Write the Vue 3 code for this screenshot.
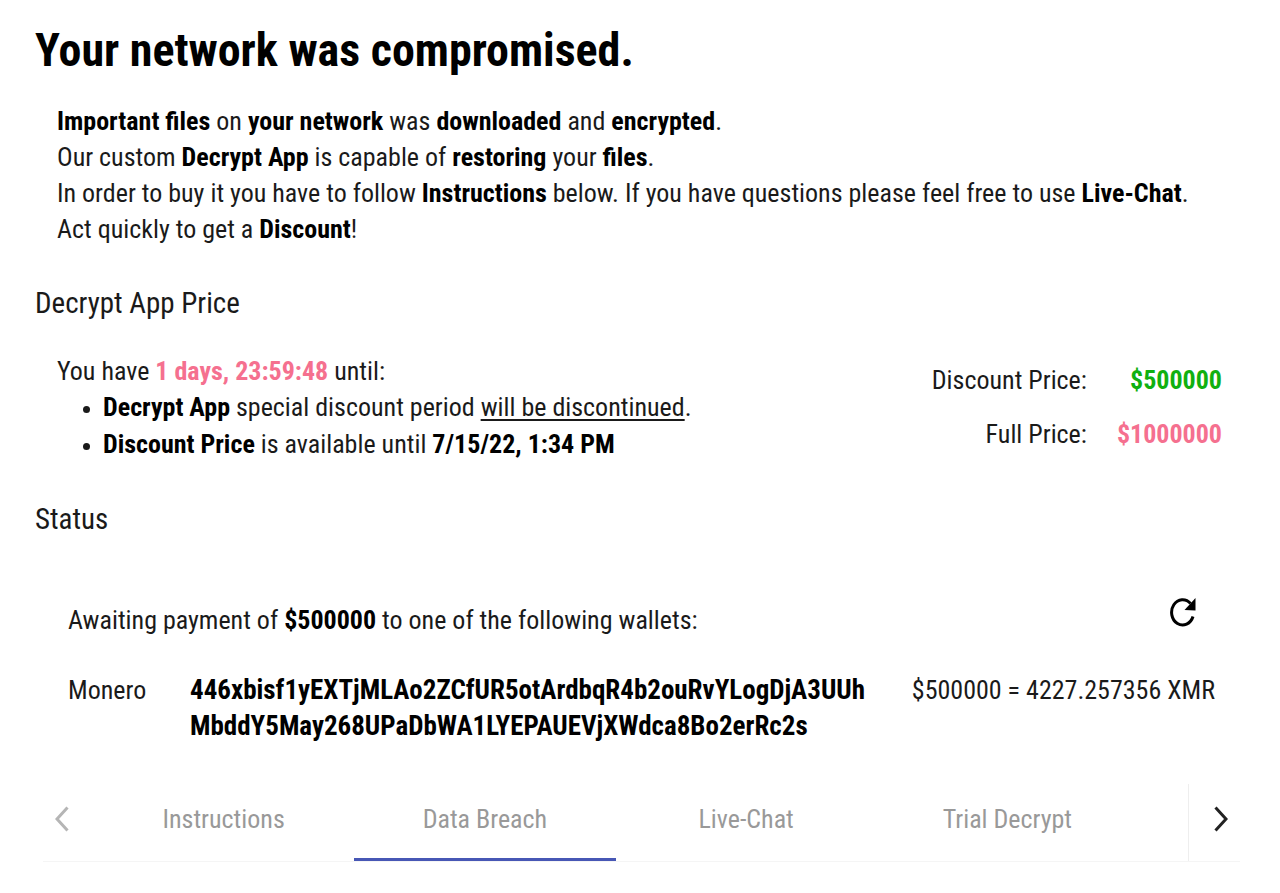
<script setup>
import { ref } from 'vue'

const tabs = ['Instructions', 'Data Breach', 'Live-Chat', 'Trial Decrypt']
const active = ref('Data Breach')
</script>

<template>
  <main class="page">
    <h1>Your network was compromised.</h1>

    <section class="intro">
      <p><b>Important files</b> on <b>your network</b> was <b>downloaded</b> and <b>encrypted</b>.</p>
      <p>Our custom <b>Decrypt App</b> is capable of <b>restoring</b> your <b>files</b>.</p>
      <p>In order to buy it you have to follow <b>Instructions</b> below. If you have questions please feel free to use <b>Live-Chat</b>.</p>
      <p>Act quickly to get a <b>Discount</b>!</p>
    </section>

    <h2>Decrypt App Price</h2>
    <section class="price">
      <div class="terms">
        <p>You have <b class="pink">1 days, 23:59:48</b> until:</p>
        <ul>
          <li><b>Decrypt App</b> special discount period <u>will be discontinued</u>.</li>
          <li><b>Discount Price</b> is available until <b>7/15/22, 1:34 PM</b></li>
        </ul>
      </div>
      <dl>
        <dt>Discount Price:</dt>
        <dd class="green">$500000</dd>
        <dt>Full Price:</dt>
        <dd class="pink">$1000000</dd>
      </dl>
    </section>

    <h2>Status</h2>
    <section class="status">
      <div class="awaiting">
        <p>Awaiting payment of <b>$500000</b> to one of the following wallets:</p>
        <button class="refresh" aria-label="Refresh">
          <svg viewBox="0 0 27 30" width="27" height="30">
            <path d="M21.5 6.5A11 12.7 0 1 0 24 19.5" fill="none" stroke="#000" stroke-width="3" />
            <path d="M26.5 1v12.5L15.5 13z" />
          </svg>
        </button>
      </div>
      <div class="wallet">
        <span>Monero</span>
        <b class="address">446xbisf1yEXTjMLAo2ZCfUR5otArdbqR4b2ouRvYLogDjA3UUh<wbr />MbddY5May268UPaDbWA1LYEPAUEVjXWdca8Bo2erRc2s</b>
        <span>$500000 = 4227.257356 XMR</span>
      </div>
    </section>

    <nav class="tabs">
      <button class="arrow" aria-label="Previous tabs" disabled>
        <svg viewBox="0 0 14 26" width="14" height="26"><path d="M12.5 1.5 2 13l10.500 11.500" /></svg>
      </button>
      <div class="list" role="tablist">
        <button v-for="tab in tabs" :key="tab" class="tab" role="tab" :class="{ active: tab === active }" :aria-selected="tab === active" @click="active = tab">{{ tab }}</button>
      </div>
      <button class="arrow next" aria-label="Next tabs">
        <svg viewBox="0 0 14 26" width="14" height="26"><path d="M1.500 1.500 12 13 1.500 24.500" /></svg>
      </button>
    </nav>
  </main>
</template>

<style>
body {
  background: #fff;
}
</style>

<style scoped>
.page {
  box-sizing: border-box;
  padding: 20px 40px 30px 35px;
  font: 26px/36px "Roboto Condensed", Roboto, sans-serif;
  color: #1a1a1a;
}
h1 {
  margin: 0;
  font-size: 46px;
  line-height: 60px;
  font-weight: 700;
  color: #000;
}
h2 {
  margin: 0;
  font-size: 29px;
  line-height: 36px;
  font-weight: 400;
}
p,
ul,
dl,
dd {
  margin: 0;
}
b {
  color: #000;
}
.intro {
  padding: 23px 0 38px 22px;
}
.price {
  display: flex;
  justify-content: space-between;
  align-items: flex-start;
  padding: 32px 18px 38px 22px;
}
ul {
  padding-left: 46px;
}
li {
  line-height: 37px;
}
li::marker {
  font-size: 22px;
}
u {
  text-underline-offset: 3px;
  text-decoration-thickness: 2px;
}
dl {
  display: grid;
  grid-template-columns: auto auto;
  column-gap: 30px;
  row-gap: 18px;
  padding-top: 9px;
  text-align: right;
}
dd {
  font-weight: 700;
}
.pink {
  color: #f5708f;
}
.green {
  color: #10b010;
}
.status {
  padding: 60px 25px 0 33px;
}
.awaiting {
  display: flex;
  justify-content: space-between;
  align-items: flex-start;
}
.awaiting p {
  padding-top: 5px;
}
button {
  border: 0;
  padding: 0;
  background: none;
  font: inherit;
}
.refresh {
  display: flex;
  margin-right: 19px;
}
.wallet {
  display: grid;
  grid-template-columns: 122px 1fr auto;
  padding-top: 34px;
}
.address {
  font-size: 27px;
}
.tabs {
  display: flex;
  height: 77px;
  margin: 40px 0 0 8px;
  border-bottom: 1px solid #f5f5f5;
}
.arrow {
  display: grid;
  place-items: center;
  width: 50px;
  padding: 0 12px 8px 0;
}
.arrow path {
  fill: none;
  stroke: #b5b5b5;
  stroke-width: 3;
}
.next {
  width: 52px;
  padding: 0 0 8px 12px;
  border-left: 1px solid #eee;
}
.next path {
  stroke: #222;
}
.list {
  display: flex;
  flex: 1;
  padding-right: 50px;
}
.tab {
  flex: 1 1 0;
  padding-bottom: 4px;
  border-bottom: 3px solid transparent;
  color: #999;
}
.tab.active {
  border-color: #4757b5;
}
</style>
